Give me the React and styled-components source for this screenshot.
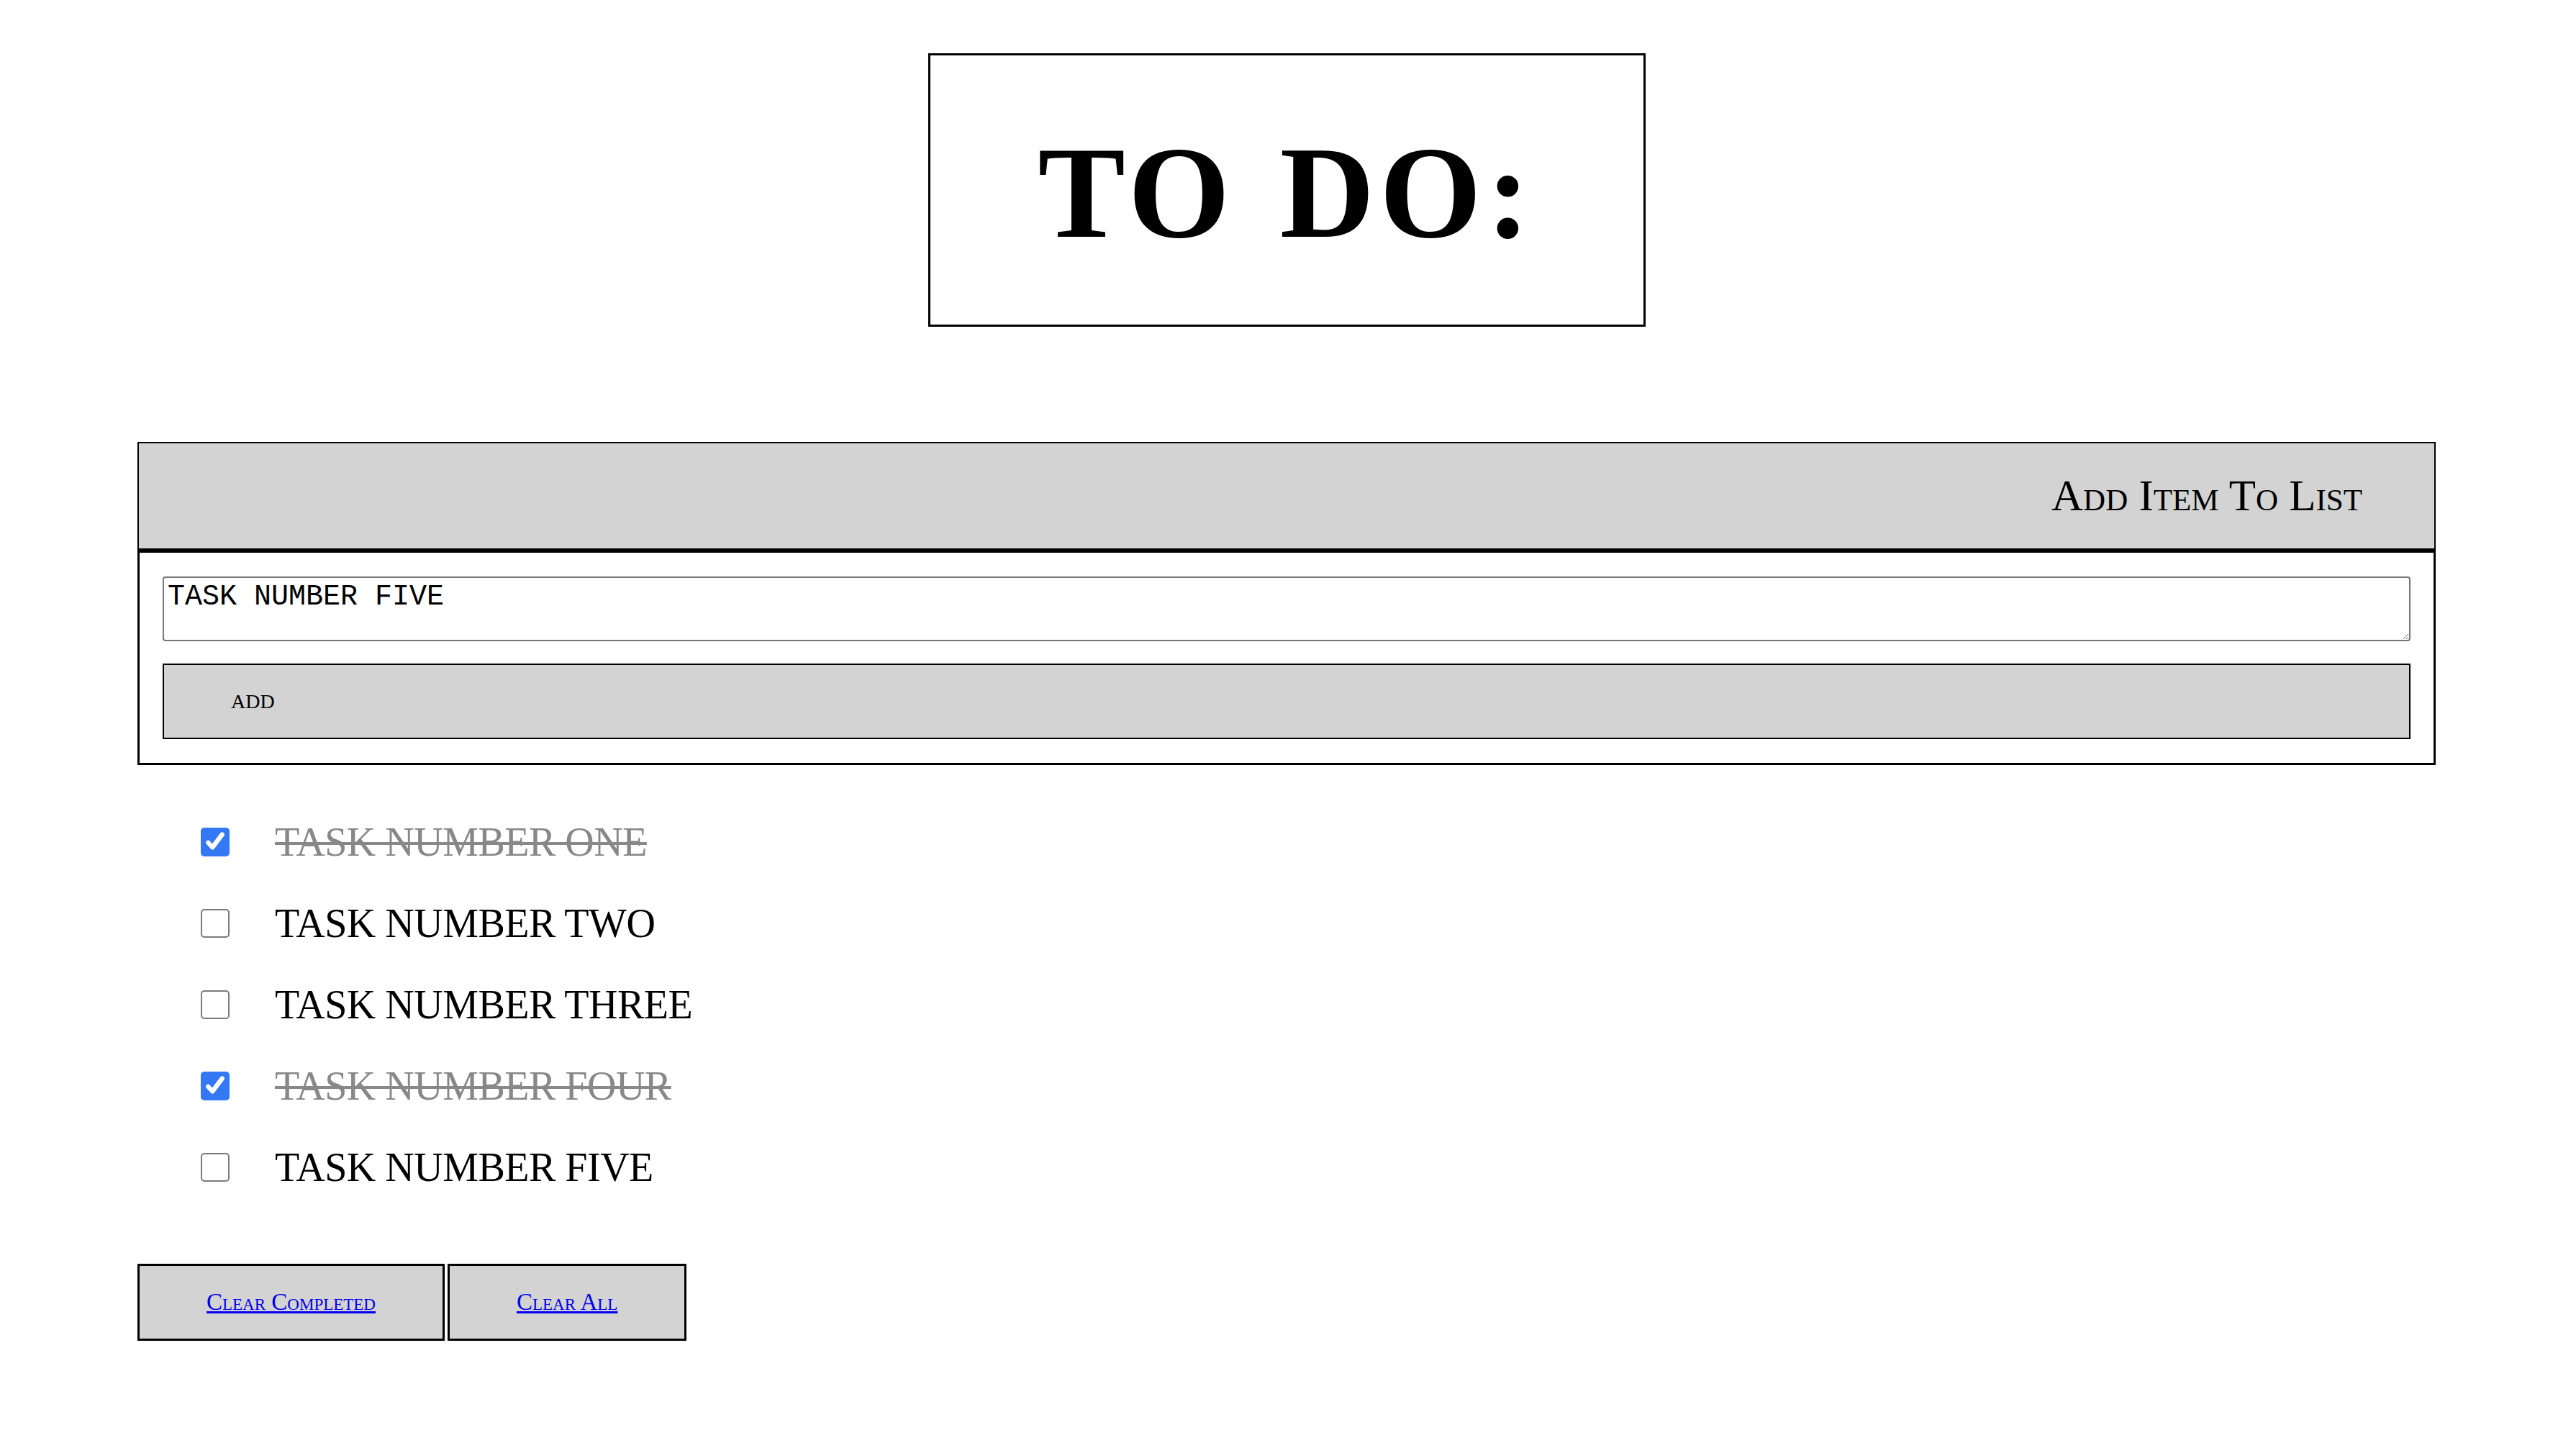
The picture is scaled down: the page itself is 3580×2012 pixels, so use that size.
import React, { useState } from "react";
import styled, { createGlobalStyle } from "styled-components";

const GlobalStyle = createGlobalStyle`
  body {
    margin: 0;
    background: #fff;
    font-family: "Liberation Serif", "Times New Roman", serif;
    color: #000;
  }
`;

const initialTasks = [
  { id: 1, text: "Task number one", done: true },
  { id: 2, text: "Task number two", done: false },
  { id: 3, text: "Task number three", done: false },
  { id: 4, text: "Task number four", done: true },
  { id: 5, text: "Task number five", done: false },
];

function App() {
  const [tasks, setTasks] = useState(initialTasks);
  const [draft, setDraft] = useState("TASK NUMBER FIVE");

  const toggle = (id) =>
    setTasks(tasks.map((t) => (t.id === id ? { ...t, done: !t.done } : t)));

  const addTask = () => {
    if (!draft.trim()) return;
    setTasks([...tasks, { id: Date.now(), text: draft, done: false }]);
    setDraft("");
  };

  return (
    <Page>
      <GlobalStyle />
      <TitleBox>
        <Title>TO DO:</Title>
      </TitleBox>

      <Panel>
        <PanelHeader>
          <h2>Add Item To List</h2>
        </PanelHeader>
        <PanelBody>
          <TaskInput
            value={draft}
            onChange={(e) => setDraft(e.target.value)}
          />
          <AddButton onClick={addTask}>ADD</AddButton>
        </PanelBody>
      </Panel>

      <TaskList>
        {tasks.map((task) => (
          <TaskRow key={task.id} onClick={() => toggle(task.id)}>
            <Check $checked={task.done}>
              {task.done && (
                <svg viewBox="0 0 24 24" width="36" height="36">
                  <path
                    d="M5.5 12.5l4 4.5L18.5 5"
                    fill="none"
                    stroke="#fff"
                    strokeWidth="4.2"
                    strokeLinecap="round"
                    strokeLinejoin="round"
                  />
                </svg>
              )}
            </Check>
            <TaskText $done={task.done}>{task.text}</TaskText>
          </TaskRow>
        ))}
      </TaskList>

      <Footer>
        <ClearButton onClick={() => setTasks(tasks.filter((t) => !t.done))}>
          <a href="#clear-completed">Clear Completed</a>
        </ClearButton>
        <ClearButton onClick={() => setTasks([])}>
          <a href="#clear-all">Clear All</a>
        </ClearButton>
      </Footer>
    </Page>
  );
}

const Page = styled.div`
  padding: 74px 195px 80px 191px;
`;

const TitleBox = styled.div`
  width: 997px;
  height: 380px;
  box-sizing: border-box;
  margin: 0 auto;
  border: 3px solid #000;
  display: flex;
  align-items: center;
  justify-content: center;
`;

const Title = styled.h1`
  margin: 0 0 -8px;
  font-family: "Liberation Serif", "Times New Roman", serif;
  font-weight: bold;
  font-size: 182px;
  letter-spacing: 7px;
  word-spacing: 10px;
  line-height: 1;
  white-space: pre;
`;

const Panel = styled.section`
  margin-top: 160px;
`;

const PanelHeader = styled.div`
  height: 151px;
  box-sizing: border-box;
  border: 2px solid #000;
  border-bottom-width: 3px;
  background: #d3d3d3;
  display: flex;
  align-items: center;
  justify-content: flex-end;
  padding-right: 100px;

  h2 {
    margin: 0;
    font-size: 61px;
    font-weight: normal;
    font-variant: small-caps;
  }
`;

const PanelBody = styled.div`
  border: 3px solid #000;
  padding: 33px 32px;
  display: flex;
  flex-direction: column;
  gap: 31px;
`;

const TaskInput = styled.textarea`
  height: 90px;
  box-sizing: border-box;
  border: 2px solid #767676;
  border-radius: 4px;
  padding: 4px 5px;
  font-family: "Liberation Mono", "Courier New", monospace;
  font-size: 40px;
  color: #000;
  resize: vertical;
`;

const AddButton = styled.button`
  height: 105px;
  border: 2px solid #000;
  background: #d3d3d3;
  font-family: "Liberation Serif", serif;
  font-size: 28px;
  text-align: left;
  padding: 0 0 0 93px;
  cursor: pointer;
`;

const TaskList = styled.ul`
  list-style: none;
  margin: 50px 0 0;
  padding: 0 0 0 88px;
`;

const TaskRow = styled.li`
  height: 113px;
  display: flex;
  align-items: center;
  gap: 63px;
  cursor: pointer;
`;

const Check = styled.span`
  width: 40px;
  height: 40px;
  box-sizing: border-box;
  border-radius: 5px;
  border: ${({ $checked }) => ($checked ? "none" : "2px solid #7a7a7a")};
  background: ${({ $checked }) => ($checked ? "#3478f6" : "#fff")};
  display: flex;
  align-items: center;
  justify-content: center;
  flex-shrink: 0;
`;

const TaskText = styled.span`
  font-size: 56px;
  letter-spacing: -0.5px;
  text-transform: uppercase;
  color: ${({ $done }) => ($done ? "#888" : "#000")};
  text-decoration: ${({ $done }) => ($done ? "line-through" : "none")};
  text-decoration-thickness: 4px;
`;

const Footer = styled.div`
  margin-top: 78px;
  display: flex;
  gap: 4px;
`;

const ClearButton = styled.button`
  height: 107px;
  padding: 0 93px;
  border: 3px solid #000;
  background: #d3d3d3;
  cursor: pointer;

  a {
    font-family: "Liberation Serif", serif;
    font-size: 33px;
    font-variant: small-caps;
    color: #0000ee;
    text-decoration: underline;
  }
`;

export default App;
